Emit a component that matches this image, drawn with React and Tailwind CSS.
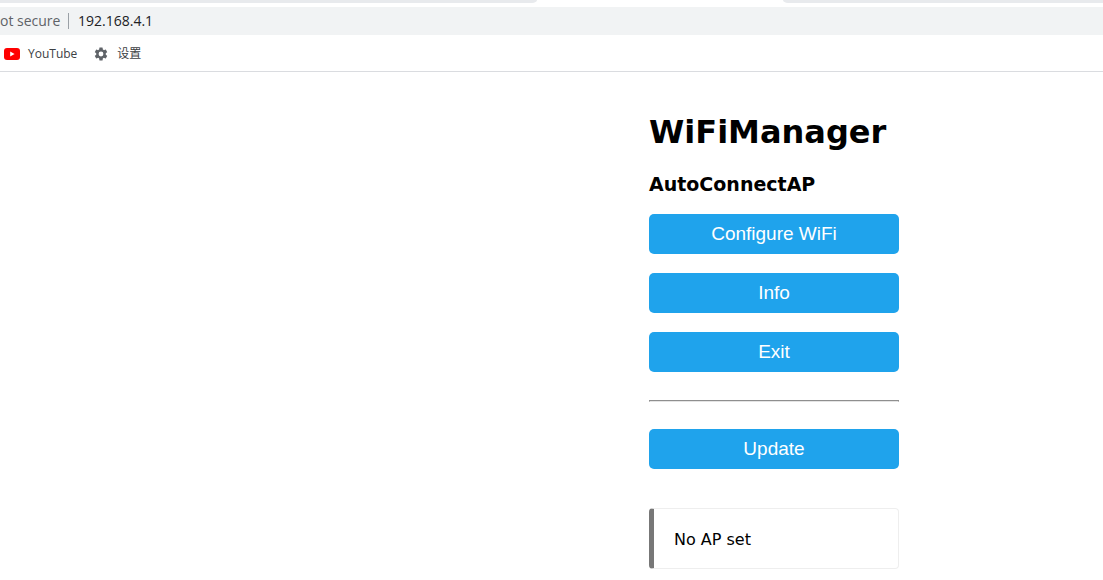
function YouTubeIcon() {
  return (
    <svg width="16" height="12" viewBox="0 0 16 12" aria-hidden="true">
      <rect width="16" height="12" rx="3" fill="#ff0000" />
      <path d="M6.2 3.4 10.6 6 6.2 8.6z" fill="#fff" />
    </svg>
  );
}

function GearIcon() {
  return (
    <svg width="16" height="16" viewBox="0 0 24 24" fill="#5f6368" aria-hidden="true">
      <path d="M19.14 12.94c.04-.3.06-.61.06-.94 0-.32-.02-.64-.07-.94l2.03-1.58a.49.49 0 0 0 .12-.61l-1.92-3.32a.49.49 0 0 0-.59-.22l-2.39.96c-.5-.38-1.03-.7-1.62-.94l-.36-2.54a.48.48 0 0 0-.48-.41h-3.84c-.24 0-.43.17-.47.41l-.36 2.54c-.59.24-1.13.57-1.62.94l-2.39-.96a.48.48 0 0 0-.59.22L2.74 8.87c-.12.21-.08.47.12.61l2.03 1.58c-.05.3-.09.63-.09.94s.02.64.07.94l-2.03 1.58a.49.49 0 0 0-.12.61l1.92 3.32c.12.22.37.29.59.22l2.39-.96c.5.38 1.03.7 1.62.94l.36 2.54c.05.24.24.41.48.41h3.84c.24 0 .44-.17.47-.41l.36-2.54c.59-.24 1.13-.56 1.62-.94l2.39.96c.22.08.47 0 .59-.22l1.92-3.32a.47.47 0 0 0-.12-.61zM12 15.6A3.6 3.6 0 1 1 12 8.4a3.6 3.6 0 0 1 0 7.2z" />
    </svg>
  );
}

function ActionButton({ children }) {
  return (
    <button type="button" className="h-10 w-full rounded-[5px] bg-[#1fa3ec] pb-px font-['Liberation_Sans',Arial,sans-serif] text-[19px] leading-10 text-white">
      {children}
    </button>
  );
}

export default function App() {
  return (
    <div className="min-h-screen bg-white font-['DejaVu_Sans',Verdana,sans-serif] text-black">
      <header className="border-b border-[#dadce0] font-['Open_Sans','Noto_Sans_CJK_SC',sans-serif]">
        <div className="flex h-[3px] bg-white">
          <div className="w-[537px] rounded-br-[5px_3px] bg-[#e8eaed]" />
          <div className="w-[246px]" />
          <div className="flex-1 rounded-bl-[5px_3px] bg-[#e8eaed]" />
        </div>
        <div className="mt-1 flex h-7 items-center bg-[#f1f3f4] text-sm">
          <label htmlFor="address" className="w-[68px] whitespace-nowrap text-[#5f6368]">ot secure</label>
          <span className="h-4 w-px bg-[#9aa0a6]" />
          <input id="address" type="text" defaultValue="192.168.4.1" className="ml-[9px] min-w-0 flex-1 bg-transparent text-[#202124] outline-none" />
        </div>
        <nav className="flex h-9 items-center gap-4 pt-px pl-1 text-xs text-[#3c4043]">
          <a href="#youtube" className="flex items-center gap-2"><YouTubeIcon />YouTube</a>
          <a href="#settings" className="flex items-center gap-2"><GearIcon />设置</a>
        </nav>
      </header>
      <main className="flex justify-center pl-[445px]">
        <div className="w-[250px] pt-10">
          <h1 className="text-[32px] leading-10 font-bold">WiFiManager</h1>
          <h2 className="mt-5 text-[19px] leading-6 font-bold">AutoConnectAP</h2>
          <div className="mt-[18px] flex flex-col gap-[19px]">
            <ActionButton>Configure WiFi</ActionButton>
            <ActionButton>Info</ActionButton>
            <ActionButton>Exit</ActionButton>
          </div>
          <hr className="mt-7 mb-[27px] h-[2px] border border-[#8f8f8f] border-b-[#e4e4e4]" />
          <ActionButton>Update</ActionButton>
          <div className="mt-[39px] rounded-[4px] border border-l-[5px] border-[#eeeeee] border-l-[#777777] px-5 pt-[21px] pb-[18px] text-base leading-5">
            No AP set
          </div>
        </div>
      </main>
    </div>
  );
}
